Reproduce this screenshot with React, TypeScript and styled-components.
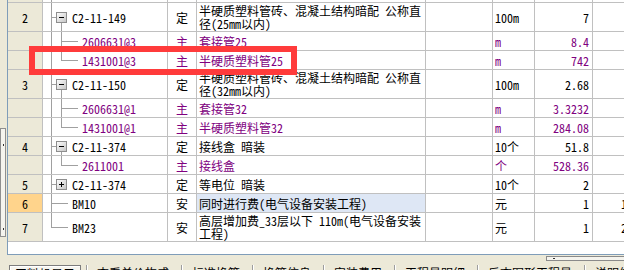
import React, { useId } from 'react';
import styled, { createGlobalStyle, css } from 'styled-components';

const C = {
  beige: '#ECE9D8',
  grid: '#C0C0C0',
  frame: '#7F9DB9',
  purple: '#800080',
  tree: '#A0A0A0',
  selNum: '#FFD48C',
  selCell: '#DEE7F5',
  red: '#FF3B3B',
};

const GlobalStyle = createGlobalStyle`
  html, body { margin: 0; padding: 0; background: ${C.beige}; overflow: hidden; }
  body {
    font-family: "Noto Sans CJK SC", "Noto Sans", sans-serif;
    font-size: 12px;
    font-feature-settings: "hwid" 1;
    color: #000;
  }
`;

const Page = styled.div`
  position: relative;
  width: 624px;
  height: 270px;
  overflow: hidden;
  display: flex;
  flex-direction: column;
`;

const Main = styled.div`
  display: flex;
  height: 255px;
  flex-shrink: 0;
`;

const LeftStrip = styled.div`
  width: 7px;
  flex-shrink: 0;
  padding-top: 128px;
  box-sizing: border-box;
`;

const VSplitter = styled.div`
  width: 6px;
  height: 109px;
  box-sizing: border-box;
  border: 1px solid #8f8f8f;
  background: #f5f4ee;
  display: flex;
  flex-direction: column;
  justify-content: space-between;
  align-items: center;
  padding: 15px 0 6px;
`;

const Grip = styled.span`
  width: 1px;
  height: 2px;
  background: #333;
`;

const Frame = styled.div`
  flex: 1;
  min-width: 0;
  box-sizing: border-box;
  border-left: 1px solid ${C.frame};
  border-bottom: 1px solid ${C.frame};
  background: #fff;
  overflow: hidden;
`;

const Row = styled.div<{ $h: number; $child?: boolean }>`
  display: flex;
  width: max-content;
  height: ${(p) => p.$h + 1}px;
  box-sizing: border-box;
  border-bottom: 1px solid ${C.grid};
  color: ${(p) => (p.$child ? C.purple : '#000')};
`;

const Cell = styled.div<{ $w: number }>`
  width: ${(p) => p.$w}px;
  flex-shrink: 0;
  box-sizing: border-box;
  border-right: 1px solid ${C.grid};
  display: flex;
  align-items: center;
  white-space: nowrap;
  overflow: hidden;
  line-height: 13px;
`;

const NumCell = styled(Cell)<{ $selected?: boolean }>`
  justify-content: center;
  color: #000;
  background: ${(p) => (p.$selected ? C.selNum : C.beige)};
`;

const CodeCell = styled(Cell)`
  align-items: stretch;
`;

const CodeText = styled.span`
  display: flex;
  align-items: center;
`;

const TypeCell = styled(Cell)`
  justify-content: center;
`;

const NameCell = styled(Cell)<{ $active?: boolean }>`
  padding-left: 2px;
  background: ${(p) => (p.$active ? C.selCell : 'transparent')};
`;

const NameText = styled.span`
  display: block;
  white-space: pre;
  line-height: 13px;
`;

const UnitCell = styled(Cell)`
  padding-left: 2px;
`;

const QtyCell = styled(Cell)`
  justify-content: flex-end;
  padding-right: 3px;
`;

const PriceCell = styled(Cell)`
  justify-content: flex-end;
  padding-right: 3px;
`;

const TreeSvg = styled.svg`
  flex-shrink: 0;
  display: block;
  shape-rendering: crispEdges;
`;

type TreeNode =
  | { kind: 'stub' }
  | { kind: 'top'; box?: '+' | '-'; hasKids?: boolean; lastTop?: boolean }
  | { kind: 'child'; lastChild?: boolean };

function TreeGuide({ node, h }: { node: TreeNode; h: number }) {
  const gid = useId().replace(/:/g, '');
  const c = Math.floor(h / 2) + 0.5;
  const w = node.kind === 'child' ? 39 : 29;
  const stroke = C.tree;
  return (
    <TreeSvg width={w} height={h} viewBox={`0 0 ${w} ${h}`}>
      <defs>
        <linearGradient id={gid} x1="0" y1="0" x2="1" y2="1">
          <stop offset="0" stopColor="#ffffff" />
          <stop offset="1" stopColor="#c4c4c4" />
        </linearGradient>
      </defs>
      {node.kind === 'stub' && <line x1={8.5} y1={0} x2={8.5} y2={h} stroke={stroke} />}
      {node.kind === 'top' && (
        <>
          <line x1={8.5} y1={0} x2={8.5} y2={node.lastTop ? c : h} stroke={stroke} />
          {node.box ? (
            <>
              <line x1={8.5} y1={c} x2={13} y2={c} stroke={stroke} />
              {node.hasKids && <line x1={18.5} y1={c + 5} x2={18.5} y2={h} stroke={stroke} />}
              <rect x={13.5} y={c - 5} width={10} height={10} fill={`url(#${gid})`} stroke="#8e8e8e" />
              <line x1={16} y1={c} x2={21} y2={c} stroke="#000" />
              {node.box === '+' && <line x1={18.5} y1={c - 2.5} x2={18.5} y2={c + 2.5} stroke="#000" />}
            </>
          ) : (
            <line x1={8.5} y1={c} x2={25} y2={c} stroke={stroke} />
          )}
        </>
      )}
      {node.kind === 'child' && (
        <>
          <line x1={8.5} y1={0} x2={8.5} y2={h} stroke={stroke} />
          <line x1={18.5} y1={0} x2={18.5} y2={node.lastChild ? c : h} stroke={stroke} />
          <line x1={18.5} y1={c} x2={35} y2={c} stroke={stroke} />
        </>
      )}
    </TreeSvg>
  );
}

const TabBar = styled.div`
  flex: 1;
  display: flex;
  flex-direction: column;
  padding-top: 1px;
`;

const HandleRow = styled.div`
  display: flex;
  justify-content: flex-end;
  margin-right: -12px;
`;

const HScrollHandle = styled.div`
  width: 90px;
  height: 5px;
  box-sizing: border-box;
  border: 1px solid #8a8a8a;
  background: #f5f4ee;
  display: flex;
  align-items: center;
  padding-left: 6px;
`;

const HGrip = styled.span`
  width: 2px;
  height: 1px;
  background: #333;
`;

const Tabs = styled.div`
  display: flex;
  align-items: flex-start;
  padding-left: 9px;
  margin-top: 4px;
`;

const Tab = styled.div<{ $active?: boolean }>`
  padding: 1px 12px 0 10px;
  line-height: 14px;
  white-space: nowrap;
  flex-shrink: 0;
  ${(p) =>
    p.$active &&
    css`
      padding: 1px 5px 0 5px;
      border: 1px solid #7c7c7c;
      box-shadow: inset 1px 1px 0 #ffffff;
      background: #f6f5ef;
      margin-right: 5px;
    `}
`;

const TabSep = styled.span`
  width: 1px;
  height: 14px;
  flex-shrink: 0;
  background: #9d9d9d;
  box-shadow: 1px 0 0 #ffffff;
`;

const Highlight = styled.div`
  position: absolute;
  left: 29px;
  top: 46px;
  width: 268px;
  height: 29px;
  box-sizing: border-box;
  border: 6px solid ${C.red};
  pointer-events: none;
`;

type RowData = {
  h: number;
  tree: TreeNode;
  num?: string;
  child?: boolean;
  selected?: boolean;
  activeName?: boolean;
  code?: string;
  type?: string;
  name?: string;
  unit?: string;
  qty?: string;
  price?: string;
};

const rows: RowData[] = [
  { h: 2, tree: { kind: 'stub' } },
  {
    h: 28, num: '2', tree: { kind: 'top', box: '-', hasKids: true }, code: 'C2-11-149', type: '定',
    name: '半硬质塑料管砖、混凝土结构暗配 公称直\n径(25mm以内)', unit: '100m', qty: '7',
  },
  { h: 18, child: true, tree: { kind: 'child' }, code: '2606631@3', type: '主', name: '套接管25', unit: 'm', qty: '8.4' },
  { h: 18, child: true, tree: { kind: 'child', lastChild: true }, code: '1431001@3', type: '主', name: '半硬质塑料管25', unit: 'm', qty: '742' },
  {
    h: 28, num: '3', tree: { kind: 'top', box: '-', hasKids: true }, code: 'C2-11-150', type: '定',
    name: '半硬质塑料管砖、混凝土结构暗配 公称直\n径(32mm以内)', unit: '100m', qty: '2.68',
  },
  { h: 18, child: true, tree: { kind: 'child' }, code: '2606631@1', type: '主', name: '套接管32', unit: 'm', qty: '3.3232' },
  { h: 18, child: true, tree: { kind: 'child', lastChild: true }, code: '1431001@1', type: '主', name: '半硬质塑料管32', unit: 'm', qty: '284.08' },
  { h: 18, num: '4', tree: { kind: 'top', box: '-', hasKids: true }, code: 'C2-11-374', type: '定', name: '接线盒 暗装', unit: '10个', qty: '51.8' },
  { h: 18, child: true, tree: { kind: 'child', lastChild: true }, code: '2611001', type: '主', name: '接线盒', unit: '个', qty: '528.36' },
  { h: 18, num: '5', tree: { kind: 'top', box: '+' }, code: 'C2-11-374', type: '定', name: '等电位 暗装', unit: '10个', qty: '2' },
  {
    h: 18, num: '6', selected: true, activeName: true, tree: { kind: 'top' }, code: 'BM10', type: '安',
    name: '同时进行费(电气设备安装工程)', unit: '元', qty: '1', price: '1234.56',
  },
  {
    h: 28, num: '7', tree: { kind: 'top', lastTop: true }, code: 'BM23', type: '安',
    name: '高层增加费_33层以下 110m(电气设备安装\n工程)', unit: '元', qty: '1', price: '2345.67',
  },
];

const tabs = ['工料机显示', '查看单价构成', '标准换算', '换算信息', '安装费用', '工程量明细', '反查图形工程量', '说明信息'];

export default function App() {
  return (
    <>
      <GlobalStyle />
      <Page>
        <Main>
          <LeftStrip>
            <VSplitter>
              <Grip />
              <Grip />
            </VSplitter>
          </LeftStrip>
          <Frame>
            {rows.map((r, i) => (
              <Row key={i} $h={r.h} $child={r.child}>
                <NumCell $w={35} $selected={r.selected}>{r.num}</NumCell>
                <CodeCell $w={125}>
                  <TreeGuide node={r.tree} h={r.h} />
                  {r.code && <CodeText>{r.code}</CodeText>}
                </CodeCell>
                <TypeCell $w={29}>{r.type}</TypeCell>
                <NameCell $w={229} $active={r.activeName}>
                  {r.name && <NameText>{r.name}</NameText>}
                </NameCell>
                <Cell $w={67} />
                <UnitCell $w={42}>{r.unit}</UnitCell>
                <QtyCell $w={58}>{r.qty}</QtyCell>
                <PriceCell $w={74}>{r.price}</PriceCell>
              </Row>
            ))}
          </Frame>
        </Main>
        <TabBar>
          <HandleRow>
            <HScrollHandle>
              <HGrip />
            </HScrollHandle>
          </HandleRow>
          <Tabs>
            {tabs.map((t, i) => (
              <React.Fragment key={t}>
                {i > 0 && <TabSep />}
                <Tab $active={i === 0}>{t}</Tab>
              </React.Fragment>
            ))}
          </Tabs>
        </TabBar>
        <Highlight />
      </Page>
    </>
  );
}
